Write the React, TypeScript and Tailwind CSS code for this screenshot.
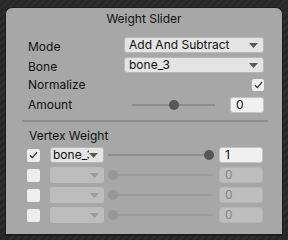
const font = { fontFamily: "Inter, 'Noto Sans', sans-serif" };

function Arrow({ dim }: { dim?: boolean }) {
  return (
    <svg width="9" height="5" viewBox="0 0 9 5" className="shrink-0">
      <path d="M0 0h9L4.5 5z" fill={dim ? "#9c9c9c" : "#5a5a5a"} />
    </svg>
  );
}

function Check() {
  return (
    <svg width="9" height="8" viewBox="0 0 9 8">
      <path d="M1 4.2l2.4 2.4L8 1.2" fill="none" stroke="#2a2a2a" strokeWidth="1.3" />
    </svg>
  );
}

function Dropdown({ text, className }: { text: string; className: string }) {
  return (
    <div
      className={`flex h-[16px] items-center rounded-[3px] border border-[#b9b9b9] bg-[#e4e4e4] pr-[5px] ${className}`}
    >
      <span className="flex-1 overflow-hidden whitespace-nowrap text-[12px] leading-[14px] text-[#101010]">
        {text}
      </span>
      <Arrow />
    </div>
  );
}

function Slider({ pos, dim, className }: { pos: number; dim?: boolean; className: string }) {
  return (
    <div className={`relative flex h-[16px] items-center ${className}`}>
      <div className={`h-[2px] w-full ${dim ? "bg-[#9c9c9c]" : "bg-[#8c8c8c]"}`} />
      <div
        className={`absolute top-[3px] h-[10px] w-[10px] rounded-full ${dim ? "bg-[#979797]" : "bg-[#575757]"}`}
        style={{ left: pos - 5 }}
      />
    </div>
  );
}

function Field({ value, dim, className }: { value: string; dim?: boolean; className: string }) {
  return (
    <div
      className={`flex h-[16px] items-center rounded-[3px] border pl-[5px] text-[12px] ${
        dim ? "border-[#b4b4b4] bg-[#bebebe] text-[#858585]" : "border-[#c4c4c4] bg-[#f0f0f0] text-[#101010]"
      } ${className}`}
    >
      {value}
    </div>
  );
}

function WeightRow({ on, bone, value }: { on?: boolean; bone?: string; value: string }) {
  return (
    <div className="ml-[21px] flex h-[16px] items-center">
      <div className="flex h-[13px] w-[13px] items-center justify-center rounded-[2px] bg-[#eeeeee]">
        {on && <Check />}
      </div>
      {on ? (
        <Dropdown text={bone ?? ""} className="ml-[10px] w-[54px] pl-[2px]" />
      ) : (
        <div className="ml-[10px] flex h-[16px] w-[54px] items-center justify-end rounded-[3px] bg-[#bdbdbd] pr-[5px]">
          <Arrow dim />
        </div>
      )}
      <Slider pos={on ? 101 : 5} dim={!on} className="ml-[4px] w-[105px]" />
      <Field value={value} dim={!on} className="ml-[6px] w-[44px]" />
    </div>
  );
}

export default function App() {
  return (
    <div
      className="h-[240px] w-[288px] bg-[repeating-linear-gradient(135deg,#2c2c2c_0px,#2c2c2c_3px,#252525_3px,#252525_5px)] px-[5px] pt-[7px]"
      style={font}
    >
      <div className="flex h-[229px] flex-col rounded-t-[7px] border border-[#1e1e1e] border-b-[2px] bg-[#a7a7a7] text-[#111111]">
        <div className="h-[22px] text-center text-[12px] leading-[22px]">Weight Slider</div>

        <div className="mt-[7px] flex h-[16px] items-start pl-[22px]">
          <span className="w-[96px] pt-[2px] text-[12px] leading-[16px]">Mode</span>
          <Dropdown text="Add And Subtract" className="w-[140px] pl-[4px]" />
        </div>
        <div className="mt-[4px] flex h-[16px] items-start pl-[22px]">
          <span className="w-[96px] pt-[2px] text-[12px] leading-[16px]">Bone</span>
          <Dropdown text="bone_3" className="w-[140px] pl-[4px]" />
        </div>
        <div className="mt-[6px] flex h-[12px] items-center pl-[22px]">
          <span className="w-[224px] text-[12px] leading-[12px]">Normalize</span>
          <div className="flex h-[12px] w-[12px] items-center justify-center rounded-[2px] bg-[#eeeeee]">
            <Check />
          </div>
        </div>
        <div className="mt-[6px] flex h-[16px] items-center pl-[22px]">
          <span className="w-[104px] text-[12px] leading-[16px]">Amount</span>
          <Slider pos={42} className="w-[83px]" />
          <Field value="0" className="ml-[15px] w-[34px] bg-[#ececec]" />
        </div>

        <div className="ml-[16px] mt-[7px] h-[2px] w-[246px] bg-[#8e8e8e]" />

        <div className="mt-[6px] h-[16px] pl-[23px] text-[12px] leading-[16px]">Vertex Weight</div>

        <div className="mt-[3px] flex flex-col gap-[4px]">
          <WeightRow on bone="bone_3" value="1" />
          <WeightRow value="0" />
          <WeightRow value="0" />
          <WeightRow value="0" />
        </div>
      </div>
    </div>
  );
}
